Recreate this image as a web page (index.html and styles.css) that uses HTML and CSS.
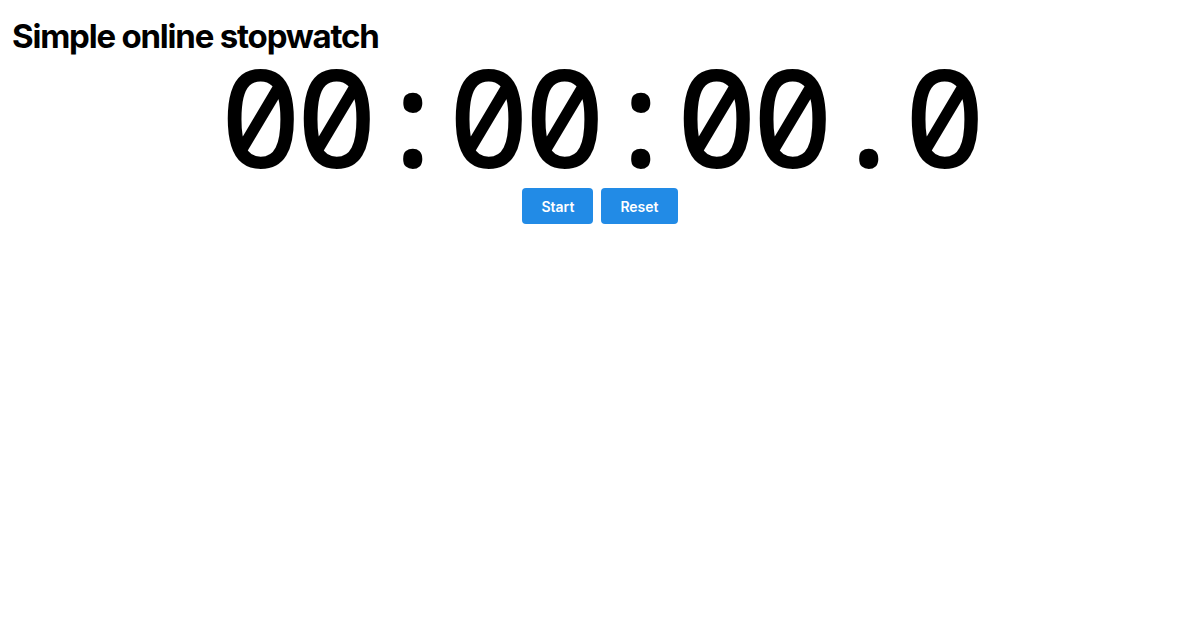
FILE: index.html
```html
<!DOCTYPE html>
<html lang="en">
<head>
    <meta charset="UTF-8">
    <meta name="viewport" content="width=device-width, initial-scale=1.0">
    <title>Simple online stopwatch</title>
    <link rel="stylesheet" href="styles.css">
</head>
<body>
    <h1 class="title">Simple online stopwatch</h1>

    <div class="stopwatch">
        <div class="display" id="display">00:00:00.0</div>
        <div class="controls">
            <button type="button" class="btn" id="start-btn">Start</button>
            <button type="button" class="btn" id="reset-btn">Reset</button>
        </div>
    </div>
</body>
</html>
```

FILE: styles.css
```css
body {
    margin: 8px 12px;
    font-family: 'Inter', 'Noto Sans', sans-serif;
    color: #000;
    background: #fff;
}
.title {
    margin: 10px 0 0;
    font-size: 33px;
    font-weight: 700;
    letter-spacing: -1.2px;
    line-height: 36px;
}
.stopwatch {
    display: flex;
    flex-direction: column;
    align-items: center;
}
/* big clock readout, slashed zeros */
.display {
    font-family: 'Noto Sans Mono', 'DejaVu Sans Mono', monospace;
    font-variant-numeric: slashed-zero;
    font-size: 136px;
    font-weight: 500;
    letter-spacing: -5.6px;
    line-height: 124px;
}
.controls {
    display: flex;
    gap: 8px;
    margin-top: 10px;
}
.btn {
    height: 36px;
    padding: 0 19px;
    border: none;
    border-radius: 4px;
    background-color: #228be6;
    color: #fff;
    font-family: 'Inter', 'Noto Sans', sans-serif;
    font-size: 14px;
    font-weight: 600;
    cursor: pointer;
}
.btn:hover {
    background-color: #1c7ed6;
}
```
